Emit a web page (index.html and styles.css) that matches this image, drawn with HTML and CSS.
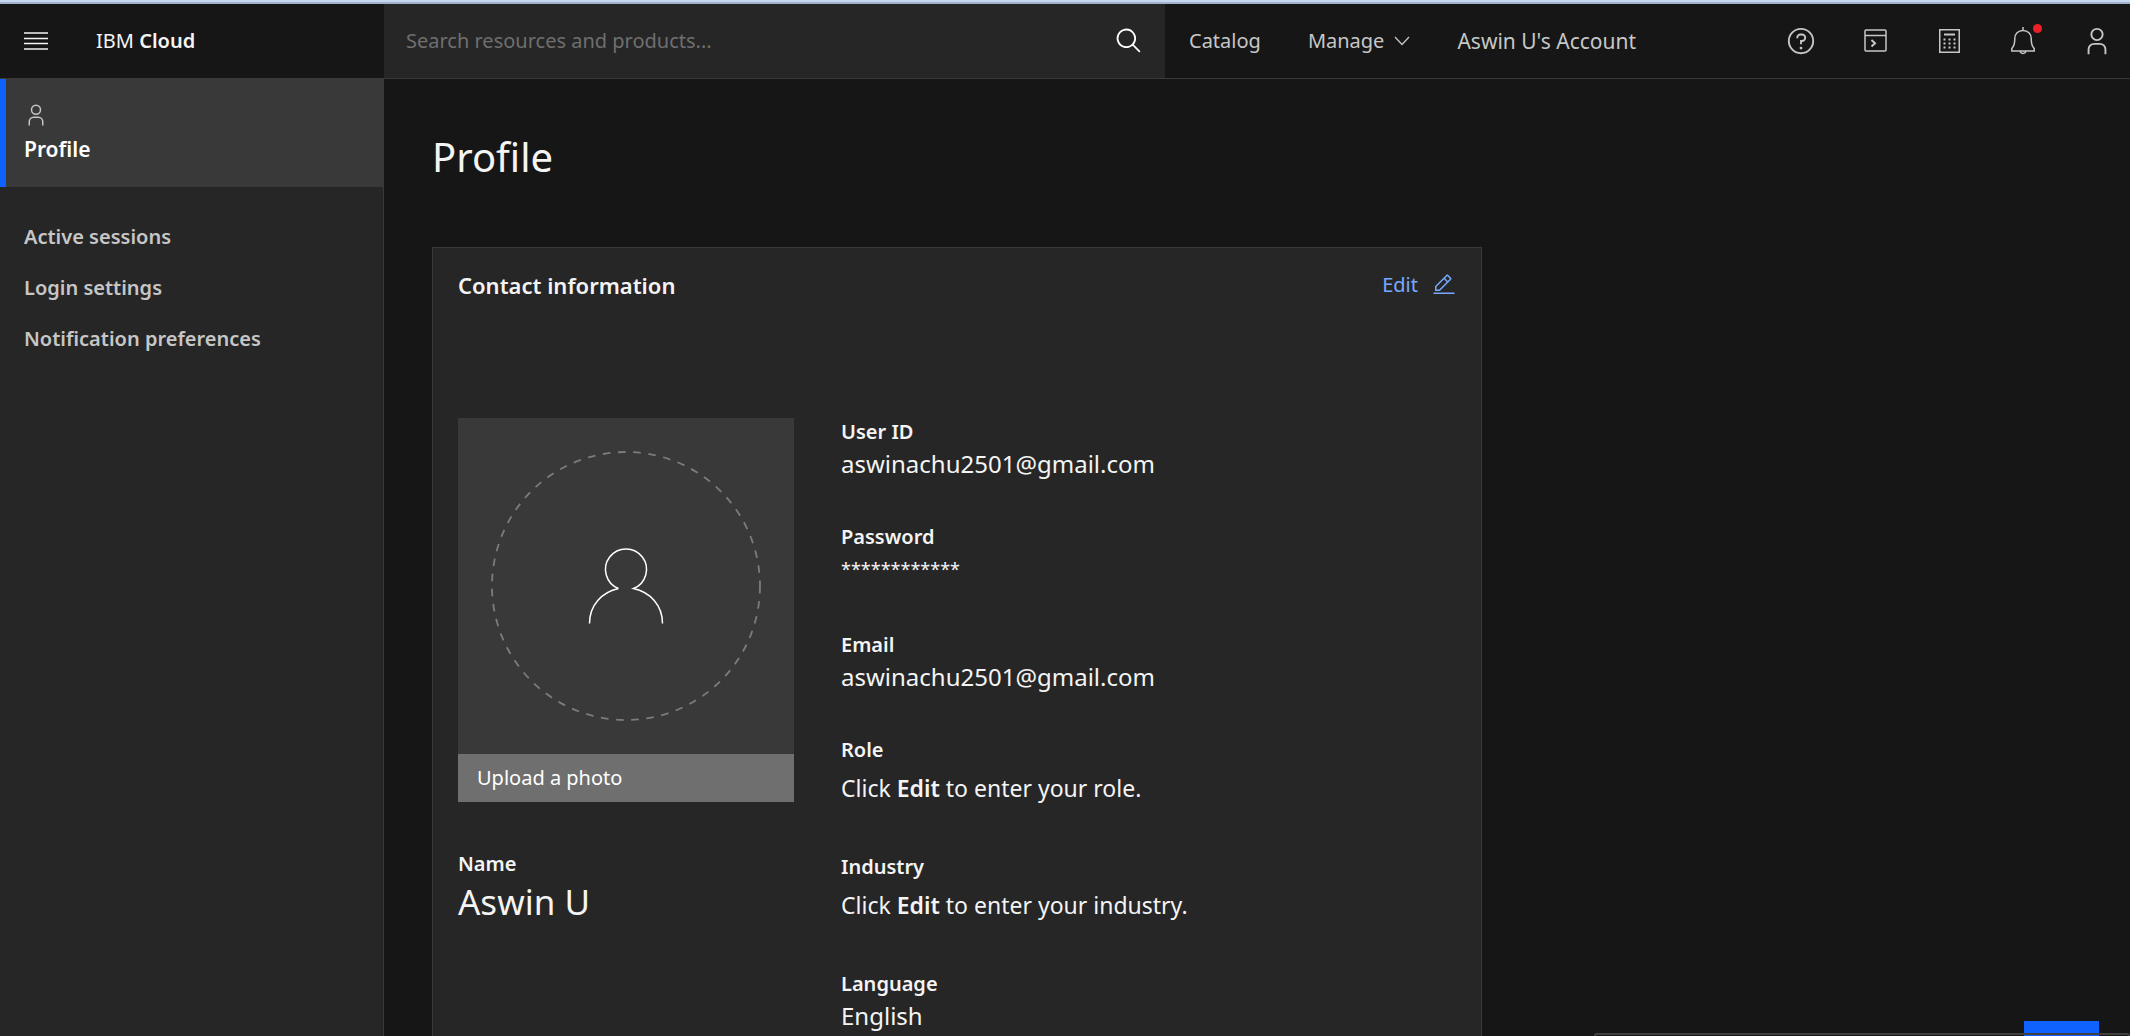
FILE: index.html
```html
<!DOCTYPE html>
<html lang="en">
<head>
<meta charset="utf-8">
<title>Profile - IBM Cloud</title>
<link rel="stylesheet" href="styles.css">
</head>
<body>
<div class="window-edge"></div>
<header class="header">
  <div class="header-brand">
    <button class="icon-button menu-button" type="button" aria-label="Menu">
      <svg width="24" height="18" viewBox="0 0 24 18" fill="none" stroke="currentColor" stroke-width="1.600"><path d="M0 1h24M0 6.500h24M0 11.500h24M0 17h24"/></svg>
    </button>
    <a class="brand" href="#">IBM <b>Cloud</b></a>
  </div>
  <form class="search" role="search">
    <input class="search-input" type="text" aria-label="Search" placeholder="Search resources and products...">
    <button class="icon-button search-button" type="button" aria-label="Search">
      <svg width="30" height="30" viewBox="-1 -1 34 34" fill="currentColor"><path d="M29 27.586l-7.552-7.552a11.018 11.018 0 1 0-1.414 1.414L27.586 29zM4 13a9 9 0 1 1 9 9 9.01 9.01 0 0 1-9-9z"/></svg>
    </button>
  </form>
  <nav class="header-nav">
    <a href="#">Catalog</a>
    <button class="manage" type="button">Manage
      <svg width="16" height="10" viewBox="0 0 16 10" fill="none" stroke="currentColor" stroke-width="1.300"><path d="M1 1l7 7.500l7-7.500"/></svg>
    </button>
    <a class="account" href="#">Aswin U's Account</a>
  </nav>
  <div class="header-tools">
    <button class="icon-button" type="button" aria-label="Help">
      <svg width="30" height="30" viewBox="0 0 32 32" fill="currentColor"><path d="M16 2a14 14 0 1 0 14 14A14 14 0 0 0 16 2zm0 26a12 12 0 1 1 12-12 12 12 0 0 1-12 12z"/><circle cx="16" cy="23.500" r="1.500"/><path d="M17 8h-1.500A4.490 4.490 0 0 0 11 12.490v.5h2v-.5A2.500 2.500 0 0 1 15.500 10H17a2.500 2.500 0 0 1 0 5h-2v4.500h2V17a4.500 4.500 0 0 0 0-9z"/></svg>
    </button>
    <button class="icon-button" type="button" aria-label="Shell">
      <svg width="30" height="30" viewBox="0 0 30 30" fill="none" stroke="currentColor" stroke-width="1.500"><rect x="5" y="4" width="21" height="21" rx="1"/><path d="M5 9.500h21"/><path d="M11.500 14l3.500 3.200l-3.500 3.200" stroke-width="2"/></svg>
    </button>
    <button class="icon-button" type="button" aria-label="Cost estimator">
      <svg width="30" height="30" viewBox="0 0 30 30" fill="currentColor"><path d="M5 3h21v24H5zM6.500 4.500v21h18v-21z" fill-rule="evenodd"/><path d="M10 7.500h11v2H10zM9.500 12.500h2v2h-2zM14.500 12.500h2v2h-2zM19.500 12.500h2v2h-2zM9.500 16.500h2v2h-2zM14.500 16.500h2v2h-2zM19.500 16.500h2v2h-2zM9.500 20.500h2v2h-2zM14.500 20.500h2v2h-2zM19.500 20.500h2v2h-2z"/></svg>
    </button>
    <button class="icon-button notifications" type="button" aria-label="Notifications">
      <svg width="30" height="30" viewBox="0 0 30 30" fill="none" stroke="currentColor" stroke-width="1.500"><path d="M15 1v4M15 4.500c-5 0-8.200 3.500-8.200 8c0 6-.8 8-3 10V25h22.400V22.500c-2.200-2-3-4-3-10c0-4.500-3.200-8-8.200-8zM12 25c.5 3.200 5.500 3.200 6 0"/></svg>
    </button>
    <button class="icon-button" type="button" aria-label="User">
      <svg width="30" height="30" viewBox="0 0 32 32" fill="currentColor"><path d="M16 4a5 5 0 1 1-5 5 5 5 0 0 1 5-5m0-2a7 7 0 1 0 7 7 7 7 0 0 0-7-7zM26 30h-2v-5a5 5 0 0 0-5-5h-6a5 5 0 0 0-5 5v5H6v-5a7 7 0 0 1 7-7h6a7 7 0 0 1 7 7z"/></svg>
    </button>
  </div>
</header>
<div class="layout">
  <nav class="sidebar">
    <a class="side-current" href="#">
      <svg width="24" height="24" viewBox="0 0 32 32" fill="currentColor"><path d="M16 4a5 5 0 1 1-5 5 5 5 0 0 1 5-5m0-2a7 7 0 1 0 7 7 7 7 0 0 0-7-7zM26 30h-2v-5a5 5 0 0 0-5-5h-6a5 5 0 0 0-5 5v5H6v-5a7 7 0 0 1 7-7h6a7 7 0 0 1 7 7z"/></svg>
      <span>Profile</span>
    </a>
    <ul class="side-list">
      <li><a href="#">Active sessions</a></li>
      <li><a href="#">Login settings</a></li>
      <li><a href="#">Notification preferences</a></li>
    </ul>
  </nav>
  <main class="main">
    <h1 class="title">Profile</h1>
    <section class="card">
      <div class="card-head">
        <h2 class="card-title">Contact information</h2>
        <button class="edit" type="button">Edit
          <svg width="24" height="24" viewBox="0 0 32 32" fill="currentColor"><path d="M2 26h28v2H2zM25.400 9c.8-.8.8-2 0-2.800l-3.600-3.600c-.8-.8-2-.8-2.800 0l-15 15V24h6.400zM20.400 4L24 7.600l-3 3L17.400 7zM6 22v-3.600l10-10 3.600 3.600-10 10z"/></svg>
        </button>
      </div>
      <div class="card-body">
        <div class="identity">
          <div class="photo">
            <svg class="photo-art" viewBox="0 0 336 336" fill="none"><circle cx="168" cy="168" r="134" stroke="#7c7c7c" stroke-width="1.800" stroke-dasharray="7.600 7.600"/><path d="M160.500 170.500a20.500 20.500 0 1 1 15 0c16 3.500 29 16 29 35M160.500 170.500c-16 3.500-29 16-29 35" stroke="#fff" stroke-width="1.500"/></svg>
            <button class="upload" type="button">Upload a photo</button>
          </div>
          <dl class="name">
            <dt>Name</dt>
            <dd>Aswin U</dd>
          </dl>
        </div>
        <dl class="fields">
          <div class="field"><dt>User ID</dt><dd>aswinachu2501@gmail.com</dd></div>
          <div class="field"><dt>Password</dt><dd class="masked">************</dd></div>
          <div class="field"><dt>Email</dt><dd>aswinachu2501@gmail.com</dd></div>
          <div class="field"><dt>Role</dt><dd class="hint">Click <b>Edit</b> to enter your role.</dd></div>
          <div class="field"><dt>Industry</dt><dd class="hint">Click <b>Edit</b> to enter your industry.</dd></div>
          <div class="field"><dt>Language</dt><dd>English</dd></div>
        </dl>
      </div>
    </section>
  </main>
</div>
<button class="feedback" type="button" aria-label="Feedback"></button>
<div class="status-panel"></div>
</body>
</html>
```
FILE: styles.css
```css
* { box-sizing: border-box; }
html, body { height: 100%; }
body {
  margin: 0;
  display: flex;
  flex-direction: column;
  overflow: hidden;
  background: #161616;
  color: #f4f4f4;
  font: 20px/28px "Noto Sans", sans-serif;
}
a { color: inherit; text-decoration: none; }
button { margin: 0; padding: 0; border: 0; background: none; color: inherit; font: inherit; }
svg { display: block; }
h1, h2, dl, dd, ul { margin: 0; padding: 0; font-weight: 400; }
ul { list-style: none; }
b, dt { font-weight: 600; }

.window-edge { flex: none; height: 4px; background: #c6d8f2; border-bottom: 2px solid #a2b1cb; }

.header { flex: none; display: flex; height: 75px; border-bottom: 1px solid #393939; color: #c6c6c6; }
.header-brand { flex: none; display: flex; align-items: center; gap: 48px; width: 384px; padding-left: 24px; color: #f4f4f4; }
.search { display: flex; align-items: center; flex: 0 1 781px; background: #262626; padding: 0 21px 0 22px; color: #fff; }
.search-input { flex: 1; min-width: 0; padding: 0; border: 0; outline: 0; background: none; color: #f4f4f4; font: inherit; }
.search-input::placeholder { color: #6f6f6f; opacity: 1; }
.header-nav { flex: none; display: flex; align-items: center; gap: 47px; padding-left: 24px; }
.manage { display: flex; align-items: center; gap: 10px; }
.account { font-size: 21px; }
.header-tools { display: flex; align-items: center; gap: 44px; margin-left: auto; padding-right: 18px; }
.notifications { position: relative; }
.notifications::after { content: ""; position: absolute; top: -2px; right: -4px; width: 9px; height: 9px; border-radius: 50%; background: #ee2027; }

.layout { flex: 1; display: flex; min-height: 0; }
.sidebar { flex: none; width: 384px; background: #262626; border-right: 1px solid #393939; color: #c6c6c6; }
.side-current { display: flex; flex-direction: column; gap: 8px; height: 108px; padding: 24px 18px; border-left: 6px solid #0f62fe; background: #393939; font-size: 21px; font-weight: 600; }
.side-current span { color: #fff; }
.side-list { display: flex; flex-direction: column; gap: 23px; padding: 36px 24px; font-weight: 600; }

.main { flex: 1; padding: 48px; overflow-y: auto; scrollbar-width: none; }
.title { font-size: 40px; line-height: 60px; }
.card { width: 1050px; max-width: 100%; margin-top: 60px; padding: 23px 25px; border: 1px solid #393939; background: #262626; }
.card-head { display: flex; align-items: center; justify-content: space-between; }
.card-title { font-size: 22px; font-weight: 600; }
.edit { display: flex; align-items: center; gap: 14px; color: #78a9ff; }
.card-body { display: flex; gap: 47px; margin-top: 119px; }
.identity { width: 336px; }
.photo { background: #393939; }
.upload { width: 100%; height: 48px; padding: 0 19px; background: #6f6f6f; color: #fff; text-align: left; }
.name { margin-top: 48px; }
.name dd { font-size: 35px; line-height: 48px; }
.fields { display: flex; flex-direction: column; gap: 41px; }
.field dd { font-size: 24px; line-height: 36px; }
.field .hint { padding: 6px 0; font-size: 23px; }
.field .masked { padding-bottom: 3px; font-size: 18px; }

.feedback { position: fixed; right: 31px; bottom: 0; width: 75px; height: 15px; background: #0f62fe; }
.status-panel { position: fixed; right: 0; bottom: 0; width: 536px; height: 3px; border: 2px solid #404040; border-bottom: 0; border-radius: 6px 6px 0 0; }
```
